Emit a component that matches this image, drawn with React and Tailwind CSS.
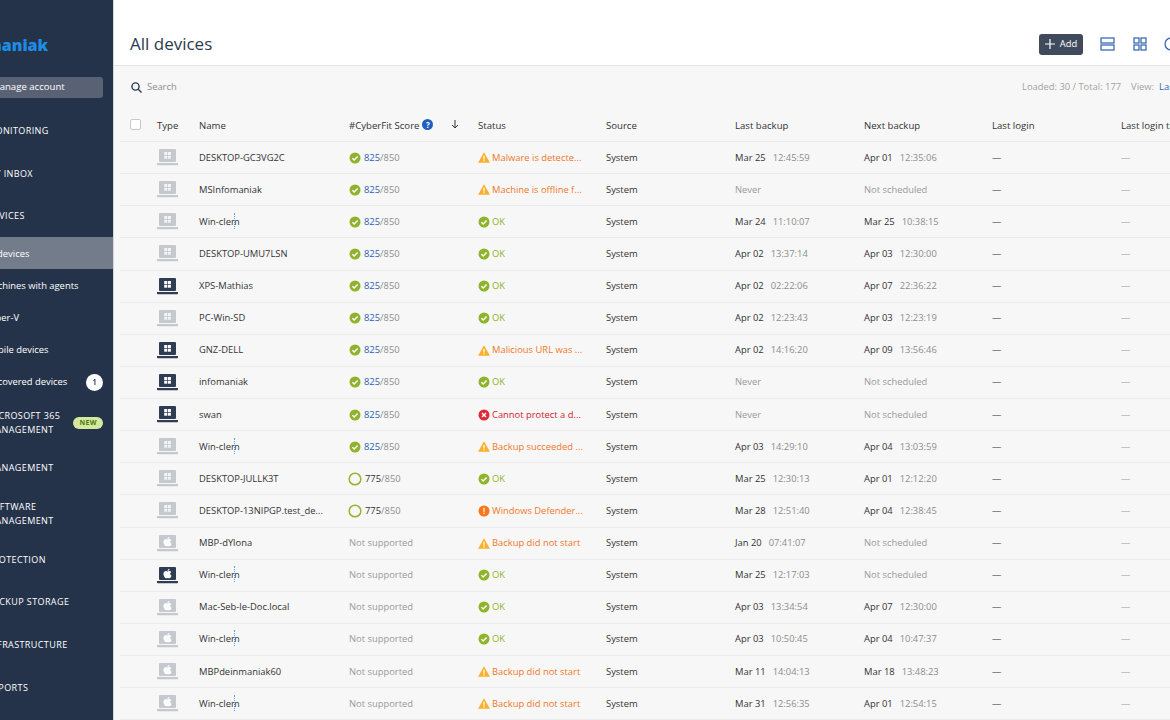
import React from "react";
import { FaApple } from "react-icons/fa";

const F = "font-['Open_Sans',sans-serif]";

const rows = [
  ["w", 0, "DESKTOP-GC3VG2C", 825, "warn", "Malware is detecte...", ["Mar 25", "12:45:59"], ["Apr 01", "12:35:06"]],
  ["w", 0, "MSInfomaniak", 825, "warn", "Machine is offline f...", "Never", "Not scheduled"],
  ["w", 0, "Win-clem", 825, "ok", "OK", ["Mar 24", "11:10:07"], ["Mar 25", "10:38:15"], true],
  ["w", 0, "DESKTOP-UMU7LSN", 825, "ok", "OK", ["Apr 02", "13:37:14"], ["Apr 03", "12:30:00"]],
  ["w", 1, "XPS-Mathias", 825, "ok", "OK", ["Apr 02", "02:22:06"], ["Apr 07", "22:36:22"]],
  ["w", 0, "PC-Win-SD", 825, "ok", "OK", ["Apr 02", "12:23:43"], ["Apr 03", "12:23:19"]],
  ["w", 1, "GNZ-DELL", 825, "warn", "Malicious URL was ...", ["Apr 02", "14:16:20"], ["Apr 09", "13:56:46"]],
  ["w", 1, "infomaniak", 825, "ok", "OK", "Never", "Not scheduled"],
  ["w", 1, "swan", 825, "err", "Cannot protect a d...", "Never", "Not scheduled"],
  ["w", 0, "Win-clem", 825, "warn", "Backup succeeded ...", ["Apr 03", "14:29:10"], ["Apr 04", "13:03:59"], true],
  ["w", 0, "DESKTOP-JULLK3T", 775, "ok", "OK", ["Mar 25", "12:30:13"], ["Apr 01", "12:12:20"]],
  ["w", 0, "DESKTOP-13NIPGP.test_de...", 775, "alert", "Windows Defender...", ["Mar 28", "12:51:40"], ["Apr 04", "12:38:45"]],
  ["a", 0, "MBP-dYlona", 0, "warn", "Backup did not start", ["Jan 20", "07:41:07"], "Not scheduled"],
  ["a", 1, "Win-clem", 0, "ok", "OK", ["Mar 25", "12:17:03"], "Not scheduled", true],
  ["a", 0, "Mac-Seb-le-Doc.local", 0, "ok", "OK", ["Apr 03", "13:34:54"], ["Apr 07", "12:30:00"]],
  ["a", 0, "Win-clem", 0, "ok", "OK", ["Apr 03", "10:50:45"], ["Apr 04", "10:47:37"], true],
  ["a", 0, "MBPdeinmaniak60", 0, "warn", "Backup did not start", ["Mar 11", "14:04:13"], ["Mar 18", "13:48:23"]],
  ["a", 0, "Win-clem", 0, "warn", "Backup did not start", ["Mar 31", "12:56:35"], ["Apr 01", "12:54:15"], true],
];

function Laptop({ os, dark }) {
  const c = dark ? "#2f3d52" : "#c5c8cc";
  return (
    <span className="relative block w-[21px] h-[17px]">
      <svg width="21" height="17" viewBox="0 0 21 17" className="block">
        <rect x="2" y="0" width="17" height="13" rx="1" fill={c} />
        <path d="M0 14h21v1.4a.8.8 0 0 1-.8.8H.8a.8.8 0 0 1-.8-.8z" fill={c} />
        {os === "w" && (
          <g fill={dark ? "#fff" : "#f2f3f4"}>
            <rect x="7.2" y="3" width="3" height="3" />
            <rect x="10.9" y="3" width="3" height="3" />
            <rect x="7.2" y="6.7" width="3" height="3" />
            <rect x="10.9" y="6.7" width="3" height="3" />
          </g>
        )}
      </svg>
      {os === "a" && <FaApple className="absolute left-[5px] top-[1px] text-[11px] text-white" />}
    </span>
  );
}

function StatusIcon({ kind }) {
  if (kind === "ok")
    return (
      <svg width="12" height="12" viewBox="0 0 12 12" className="shrink-0">
        <circle cx="6" cy="6" r="5.5" fill="#8fb32b" />
        <path d="M3.4 6.2l1.8 1.7 3.4-3.4" stroke="#fff" strokeWidth="1.4" fill="none" />
      </svg>
    );
  if (kind === "warn")
    return (
      <svg width="12" height="11" viewBox="0 0 12 11" className="shrink-0">
        <path d="M6 .3L11.9 10.7H.1z" fill="#fbb02d" />
        <rect x="5.4" y="3.8" width="1.2" height="3.8" fill="#fff" />
        <rect x="5.4" y="8.2" width="1.2" height="1.2" fill="#fff" />
      </svg>
    );
  if (kind === "err")
    return (
      <svg width="12" height="12" viewBox="0 0 12 12" className="shrink-0">
        <circle cx="6" cy="6" r="5.5" fill="#dc2a36" />
        <path d="M4 4l4 4M8 4l-4 4" stroke="#fff" strokeWidth="1.4" />
      </svg>
    );
  return (
    <svg width="12" height="12" viewBox="0 0 12 12" className="shrink-0">
      <circle cx="6" cy="6" r="5.5" fill="#f9761c" />
      <rect x="5.4" y="2.8" width="1.2" height="4" fill="#fff" />
      <rect x="5.4" y="7.7" width="1.2" height="1.3" fill="#fff" />
    </svg>
  );
}

const statusColor = {
  ok: "text-[#8fb32b]",
  warn: "text-[#f0782a]",
  err: "text-[#d3202e]",
  alert: "text-[#f0782a]",
};

function When({ v }) {
  if (typeof v === "string") return <span className="text-[#9a9a9a]">{v}</span>;
  return (
    <span className="flex gap-[7px]">
      <span className="text-[#333]">{v[0]}</span>
      <span className="text-[#8d8d8d]">{v[1]}</span>
    </span>
  );
}

function Score({ v }) {
  if (!v) return <span className="text-[#9a9a9a]">Not supported</span>;
  if (v === 825)
    return (
      <span className="flex items-center gap-[3px]">
        <StatusIcon kind="ok" />
        <span>
          <span className="text-[#2a5fb0]">825</span>
          <span className="text-[#8d8d8d]">/850</span>
        </span>
      </span>
    );
  return (
    <span className="flex items-center gap-[3px] -ml-[1px]">
      <svg width="14" height="14" viewBox="0 0 14 14" className="shrink-0">
        <circle cx="7" cy="7" r="5.8" stroke="#95b52f" strokeWidth="1.5" fill="none" />
      </svg>
      <span>
        <span className="text-[#333]">775</span>
        <span className="text-[#8d8d8d]">/850</span>
      </span>
    </span>
  );
}

const COLS = "grid grid-cols-[37px_42px_150px_129px_128px_129px_129px_128px_129px_129px]";

function Row({ r }) {
  const [os, dark, name, score, kind, status, last, next, cursor] = r;
  return (
    <div className={`${COLS} h-[32.125px] items-center border-b border-[#ececec] text-[9.4px] text-[#333]`}>
      <span />
      <Laptop os={os} dark={dark} />
      <span className="whitespace-nowrap">
        {cursor ? (
          <span className="relative">
            Win-clem
            <span className="absolute left-[35px] -top-[2px] h-[16px] border-l border-dotted border-[#5b9bd5]" />
          </span>
        ) : (
          name
        )}
      </span>
      <Score v={score} />
      <span className={`flex items-center gap-[2px] whitespace-nowrap ${statusColor[kind]}`}>
        <StatusIcon kind={kind} />
        {status}
      </span>
      <span>System</span>
      <When v={last} />
      <When v={next} />
      <span>—</span>
      <span className="text-[#9a9a9a]">—</span>
    </div>
  );
}

function Top({ children, h = "h-[43px]", right, pt = "" }) {
  return (
    <div className={`${h} ${pt} flex items-center justify-between pl-[34px] pr-[10px] text-[9px] leading-[14px] tracking-[0.4px] text-white whitespace-nowrap`}>
      <span>{children}</span>
      {right}
    </div>
  );
}

function Sub({ children, active, right }) {
  return (
    <div className={`h-[32.125px] flex items-center justify-between pl-[31px] pr-[10px] pt-[1px] text-[9.4px] text-white whitespace-nowrap ${active ? "bg-[#737c8a]" : ""}`}>
      <span>{children}</span>
      {right}
    </div>
  );
}

function Sidebar() {
  return (
    <aside className="w-[114px] shrink-0 h-[720px] overflow-hidden bg-[#25334a] border-r border-[#d5d7da]">
      <div className="w-[160px] -ml-[47px]">
        <div className="h-[77px] pt-[35px] w-[93px] text-right">
          <span className="text-[16px] leading-[20px] font-extrabold text-[#1b8de4] block">infomaniak</span>
        </div>
        <div className="ml-[22px] w-[128px] h-[21px] rounded-[3px] bg-[#586274] flex items-center pl-[16px] text-[9.6px] text-white">
          Manage account
        </div>
        <div className="h-[11px]" />
        <Top>MONITORING</Top>
        <Top>MY INBOX</Top>
        <Top h="h-[42px]">DEVICES</Top>
        <Sub active>All devices</Sub>
        <Sub>Machines with agents</Sub>
        <Sub>Hyper-V</Sub>
        <Sub>Mobile devices</Sub>
        <Sub
          right={
            <span className="w-[17px] h-[17px] rounded-full bg-white text-[#25334a] text-[8px] font-semibold flex items-center justify-center">
              1
            </span>
          }
        >
          Discovered devices
        </Sub>
        <Top
          h="h-[48px]"
          pt="pt-[2px]"
          right={
            <span className="h-[12px] px-[6px] rounded-full bg-[#d5e8a0] text-[#4f7a12] text-[7px] font-bold flex items-center">
              NEW
            </span>
          }
        >
          MICROSOFT 365
          <br />
          MANAGEMENT
        </Top>
        <Top h="h-[44px]">MANAGEMENT</Top>
        <Top h="h-[47.5px]" pt="pt-[2px]">
          SOFTWARE
          <br />
          MANAGEMENT
        </Top>
        <Top pt="pt-[2px]">PROTECTION</Top>
        <Top>BACKUP STORAGE</Top>
        <Top>INFRASTRUCTURE</Top>
        <Top>REPORTS</Top>
      </div>
    </aside>
  );
}

export default function App() {
  return (
    <div className={`${F} flex h-[720px] w-[1170px] overflow-hidden bg-[#f7f7f7]`}>
      <Sidebar />
      <main className="flex-1 min-w-0 overflow-hidden">
        <header className="h-[66px] bg-white border-b border-[#e4e4e4] flex items-center pl-[16px] pt-[23px] whitespace-nowrap">
          <h1 className="text-[17px] text-[#2c3a4e] font-normal">All devices</h1>
          <div className="ml-auto flex items-center -mr-[8px]">
            <button className="w-[44px] h-[21px] rounded-[3px] bg-[#3f4b5d] text-white text-[9.4px] flex items-center justify-center gap-[5px]">
              <svg width="10" height="10" viewBox="0 0 10 10">
                <path d="M5 0v10M0 5h10" stroke="#fff" strokeWidth="1.2" />
              </svg>
              Add
            </button>
            <svg width="15" height="14" viewBox="0 0 15 14" className="ml-[17px]" fill="none" stroke="#2a5fb0" strokeWidth="1.2">
              <rect x="1" y="1" width="13" height="5" />
              <rect x="1" y="8" width="13" height="5" />
            </svg>
            <svg width="14" height="14" viewBox="0 0 14 14" className="ml-[18px]" fill="none" stroke="#2a5fb0" strokeWidth="1.2">
              <rect x="1" y="1" width="5" height="5" />
              <rect x="8" y="1" width="5" height="5" />
              <rect x="1" y="8" width="5" height="5" />
              <rect x="8" y="8" width="5" height="5" />
            </svg>
            <svg width="14" height="14" viewBox="0 0 14 14" className="ml-[17px]" fill="none" stroke="#2a5fb0" strokeWidth="1.2">
              <circle cx="7" cy="7" r="6" />
              <path d="M7 3.5V7l2.5 1.5" />
            </svg>
          </div>
        </header>
        <div className="h-[44px] flex items-center pl-[17px] pb-[1px] text-[9.4px] whitespace-nowrap">
          <svg width="11" height="11" viewBox="0 0 11 11" fill="none" stroke="#2c3a4e" strokeWidth="1.4">
            <circle cx="4.5" cy="4.5" r="3.6" />
            <path d="M7.2 7.2L10.5 10.5" />
          </svg>
          <span className="ml-[5px] text-[#8d8d8d]">Search</span>
          <div className="ml-auto flex -mr-[40px] w-[188px]">
            <span className="text-[#a3a3a3]">Loaded: 30 / Total: 177</span>
            <span className="ml-[10px] text-[#a3a3a3]">View:</span>
            <span className="ml-[5px] text-[#2a5fb0]">Last</span>
          </div>
        </div>
        <div className={`${COLS} h-[32px] pt-[1px] items-center border-b border-[#ececec] text-[9.6px] font-medium text-[#333] whitespace-nowrap ml-[6px]`}>
          <span className="relative block h-full">
            <span className="absolute left-[10px] top-[8px] w-[11px] h-[11px] rounded-[2px] border border-[#c9c9c9] bg-white" />
          </span>
          <span>Type</span>
          <span>Name</span>
          <span className="flex items-center">
            #CyberFit Score
            <span className="ml-[3px] -mt-[2px] w-[11px] h-[11px] rounded-full bg-[#1f5fbf] text-white text-[8px] font-bold flex items-center justify-center">?</span>
            <svg width="8" height="9" viewBox="0 0 8 9" className="ml-[18px] -mt-[2px]" fill="none" stroke="#333" strokeWidth="1">
              <path d="M4 0v8M1 5l3 3 3-3" />
            </svg>
          </span>
          <span>Status</span>
          <span>Source</span>
          <span>Last backup</span>
          <span>Next backup</span>
          <span>Last login</span>
          <span>Last login time</span>
        </div>
        <div className="ml-[6px]">
          {rows.map((r, i) => (
            <Row key={i} r={r} />
          ))}
        </div>
      </main>
    </div>
  );
}
